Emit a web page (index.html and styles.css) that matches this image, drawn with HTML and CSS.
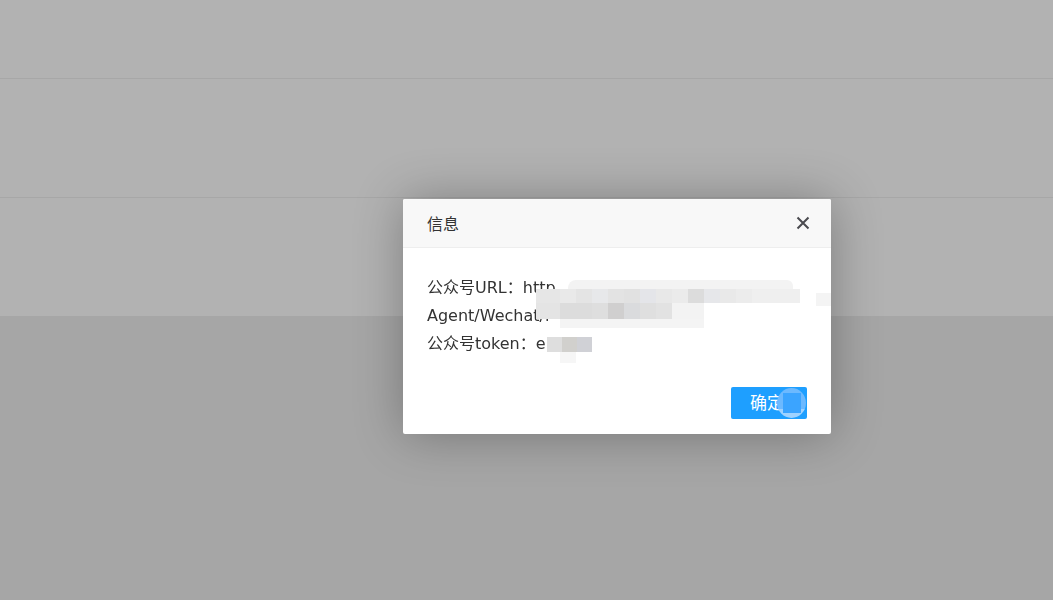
FILE: index.html
```html
<!DOCTYPE html>
<html lang="zh">
<head>
<meta charset="utf-8">
<title>信息</title>
<link rel="stylesheet" href="styles.css">
</head>
<body>
<div class="page">
  <div class="list">
    <div class="row row-first"></div>
    <div class="row"></div>
    <div class="row row-last"></div>
  </div>
</div>
<div class="shade"></div>
<div class="layer">
  <div class="layer-title">
    <span>信息</span>
    <svg class="close" width="14" height="14" viewBox="0 0 14 14"><path d="M1.5 1.5 L12.5 12.5 M12.5 1.5 L1.5 12.5" stroke="#4a4a4f" stroke-width="2" stroke-linecap="butt" fill="none"/></svg>
  </div>
  <div class="layer-content">
    <div>公众号URL：http</div>
    <div>Agent/Wechat/i</div>
    <div>公众号token：e</div>
    <div class="mosaic m-a"></div>
    <div class="mosaic m-b"></div>
    <div class="mosaic m-c"></div>
    <div class="mosaic m-d"></div>
    <div class="mosaic m-e"></div>
    <div class="mosaic m-f"></div>
    <div class="mosaic m-g"></div>
  </div>
  <div class="layer-btns">
    <a class="btn">确定<span class="btn-blur"><span class="btn-blur-sq"></span></span></a>
  </div>
</div>
</body>
</html>
```
FILE: styles.css
```css
html, body {
  margin: 0;
  padding: 0;
}
body {
  width: 1053px;
  height: 600px;
  overflow: hidden;
  background: #eeeeee;
  font-family: "DejaVu Sans", "Noto Sans CJK SC", sans-serif;
}
.page {
  width: 100%;
}
.list {
  background: #ffffff;
}
.row {
  height: 118px;
  border-bottom: 1px solid #efefef;
}
.row-first {
  height: 78px;
}
.row-last {
  height: 118px;
  border-bottom: none;
}
.shade {
  position: fixed;
  inset: 0;
  background: rgba(0, 0, 0, 0.3);
}
.layer {
  position: absolute;
  left: 403px;
  top: 199px;
  width: 428px;
  height: 235px;
  background: #ffffff;
  border-radius: 2px;
  box-shadow: 1px 1px 50px rgba(0, 0, 0, 0.3);
  display: flex;
  flex-direction: column;
  overflow: hidden;
}
.layer-title {
  height: 48px;
  flex: none;
  background: #f8f8f8;
  border-bottom: 1px solid #eeeeee;
  display: flex;
  align-items: center;
  justify-content: space-between;
  padding: 0 21px 0 24px;
  font-size: 16px;
  color: #333333;
}
.close {
  display: block;
}
.layer-content {
  position: relative;
  padding: 26px 24px 23px;
  font-size: 16px;
  line-height: 28px;
  color: #333333;
  white-space: nowrap;
}
.mosaic {
  position: absolute;
}
.m-a {
  left: 165px;
  top: 32px;
  width: 225px;
  height: 10px;
  background: #f3f3f3;
  border-radius: 8px 6px 0 0;
}
.m-b {
  left: 133px;
  top: 41px;
  width: 264px;
  height: 14px;
  background: linear-gradient(to right,
    #e6e6e6 0 24px, #e9e9e9 24px 40px, #e4e4e4 40px 56px, #e7e8ea 56px 72px,
    #e3e3e3 72px 88px, #e1e1e1 88px 104px, #e4e5e9 104px 120px, #e8e8e8 120px 136px,
    #ebebeb 136px 152px, #dcdcdc 152px 168px, #e6e7ea 168px 184px, #e9e9e9 184px 200px,
    #ececec 200px 216px, #efefef 216px 264px);
}
.m-c {
  left: 133px;
  top: 55px;
  width: 168px;
  height: 16px;
  background: linear-gradient(to right,
    #e4e4e4 0 24px, #dcdcdc 24px 56px, #dedede 56px 72px, #d0cfcf 72px 88px,
    #dadbdd 88px 104px, #dfdfdf 104px 120px, #e2e2e2 120px 136px, #f3f3f3 136px 168px);
}
.m-d {
  left: 157px;
  top: 71px;
  width: 144px;
  height: 9px;
  background: #f4f4f4;
}
.m-e {
  left: 144px;
  top: 89px;
  width: 45px;
  height: 15px;
  background: linear-gradient(to right, #dedede 0 15px, #d1d0cd 15px 30px, #d0d1d6 30px 45px);
}
.m-f {
  left: 157px;
  top: 104px;
  width: 16px;
  height: 11px;
  background: #f6f6f6;
}
.m-g {
  left: 413px;
  top: 45px;
  width: 20px;
  height: 13px;
  background: #f4f4f4;
}
.layer-btns {
  display: flex;
  justify-content: flex-end;
  padding: 6px 24px 15px;
}
.btn {
  position: relative;
  display: block;
  width: 76px;
  height: 32px;
  box-sizing: border-box;
  padding-left: 19px;
  line-height: 32px;
  background: #1e9fff;
  border-radius: 2px;
  color: #ffffff;
  font-size: 17px;
  cursor: pointer;
}
.btn-blur {
  position: absolute;
  left: 46px;
  top: 1px;
  width: 29px;
  height: 30px;
  border-radius: 50%;
  background: linear-gradient(to bottom, #6cb9ff 0 70%, #9fd2ff 70% 100%);
}
.btn-blur-sq {
  position: absolute;
  left: 6px;
  top: 5px;
  width: 18px;
  height: 20px;
  background: #3ba4ff;
}
```
